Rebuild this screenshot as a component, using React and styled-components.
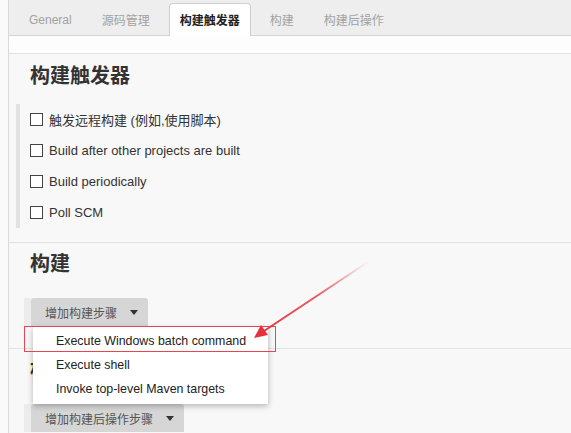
import styled, { createGlobalStyle } from "styled-components";

const GlobalStyle = createGlobalStyle`
  html, body {
    margin: 0;
    padding: 0;
    background: #fafafa;
  }
  body {
    font-family: "Liberation Sans", "Noto Sans CJK SC", sans-serif;
    color: #333;
  }
`;

const FONT = `"Liberation Sans", "Noto Sans CJK SC", sans-serif`;

const Page = styled.div`
  position: relative;
  margin-left: 8px;
  border-left: 1px solid #d9d9d9;
  background: #f8f8f8;
  height: 433px;
  overflow: hidden;
`;

const TabBar = styled.div`
  display: flex;
  align-items: flex-end;
  gap: 8px;
  height: 35px;
  padding-left: 9px;
  background: #eeeeee;
  border-bottom: 1px solid #d4d4d4;
`;

const Tab = styled.div`
  display: flex;
  align-items: center;
  height: 31px;
  padding: 0 10px 1px;
  font-family: ${FONT};
  font-size: 12px;
  font-weight: ${(p) => (p.$active ? "bold" : "normal")};
  color: ${(p) => (p.$active ? "#222" : "#a2a2a2")};
  background: ${(p) => (p.$active ? "#ffffff" : "transparent")};
  border: 1px solid ${(p) => (p.$active ? "#cfcfcf" : "transparent")};
  border-bottom: none;
  border-radius: 4px 4px 0 0;
  margin-bottom: -1px;
`;

const Strip = styled.div`
  height: 17px;
  background: #fdfdfd;
  border-bottom: 1px solid #e3e3e3;
`;

const Section = styled.section`
  position: relative;
  padding: 0 0 0 21px;
`;

const Heading = styled.h2`
  margin: ${(p) => p.$top || "9px"} 0 0;
  font-family: ${FONT};
  font-size: 20px;
  line-height: 24px;
  font-weight: bold;
  color: #333;
`;

const CheckList = styled.div`
  margin: 16px 0 0 -14px;
  padding-left: 10px;
  border-left: 4px solid #e2e2e2;
  display: flex;
  flex-direction: column;
`;

const CheckRow = styled.label`
  display: flex;
  align-items: center;
  gap: 6px;
  height: 31px;
  font-family: ${FONT};
  font-size: 13px;
  color: #333;
`;

const Box = styled.span`
  width: 11px;
  height: 11px;
  border: 1px solid #444;
  background: #fff;
  flex: none;
`;

const Separator = styled.div`
  height: 1px;
  background: #e2e2e2;
  margin-top: ${(p) => p.$top || "22px"};
`;

const ButtonRow = styled.div`
  position: relative;
  margin: 22px 0 0 -6px;
  display: flex;
`;

const ButtonWrap = styled.div`
  display: flex;
  border-left: 7px solid #ececec;
`;

const DropButton = styled.div`
  display: flex;
  align-items: center;
  gap: 13px;
  height: 28px;
  padding: 0 10px 0 14px;
  background: #d6d6d6;
  border-radius: 3px 3px 0 0;
  font-family: ${FONT};
  font-size: 12px;
  color: #555;
`;

const Caret = styled.span`
  width: 0;
  height: 0;
  border-left: 4px solid transparent;
  border-right: 4px solid transparent;
  border-top: 5px solid #333;
`;

const Menu = styled.div`
  position: absolute;
  z-index: 5;
  top: 29px;
  left: 9px;
  width: 235px;
  padding: 2px 0 3px;
  background: #fff;
  box-shadow: 0 2px 6px rgba(0, 0, 0, 0.28);
  display: flex;
  flex-direction: column;
`;

const MenuItem = styled.div`
  height: 24px;
  display: flex;
  align-items: center;
  padding-left: 23px;
  font-family: ${FONT};
  font-size: 12.4px;
  color: #222;
  white-space: nowrap;
`;

const Highlight = styled.div`
  position: absolute;
  z-index: 6;
  top: 28px;
  left: 0;
  width: 250px;
  height: 24px;
  border: 1.5px solid #e4474f;
  pointer-events: none;
`;

const Arrow = styled.svg`
  position: absolute;
  z-index: 7;
  left: -9px;
  top: 0;
  pointer-events: none;
`;

export default function App() {
  return (
    <>
      <GlobalStyle />
      <Page>
        <TabBar>
          <Tab>General</Tab>
          <Tab>源码管理</Tab>
          <Tab $active>构建触发器</Tab>
          <Tab>构建</Tab>
          <Tab>构建后操作</Tab>
        </TabBar>
        <Strip />
        <Section>
          <Heading $top="10px">构建触发器</Heading>
          <CheckList>
            <CheckRow><Box />触发远程构建 (例如,使用脚本)</CheckRow>
            <CheckRow><Box />Build after other projects are built</CheckRow>
            <CheckRow><Box />Build periodically</CheckRow>
            <CheckRow><Box />Poll SCM</CheckRow>
          </CheckList>
        </Section>
        <Separator $top="14px" />
        <Section>
          <Heading>构建</Heading>
          <ButtonRow>
            <ButtonWrap>
              <DropButton>增加构建步骤<Caret /></DropButton>
            </ButtonWrap>
            <Menu>
              <MenuItem>Execute Windows batch command</MenuItem>
              <MenuItem>Execute shell</MenuItem>
              <MenuItem>Invoke top-level Maven targets</MenuItem>
            </Menu>
            <Highlight />
          </ButtonRow>
        </Section>
        <Separator />
        <Section>
          <Heading $top="9px">构建后操作</Heading>
          <ButtonRow>
            <ButtonWrap>
              <DropButton>增加构建后操作步骤<Caret /></DropButton>
            </ButtonWrap>
          </ButtonRow>
        </Section>
        <Arrow width="571" height="433" viewBox="0 0 571 433">
          <defs>
            <linearGradient id="fade" x1="368" y1="262" x2="256" y2="337" gradientUnits="userSpaceOnUse">
              <stop offset="0" stopColor="#e8303c" stopOpacity="0" />
              <stop offset="0.45" stopColor="#e8303c" stopOpacity="0.8" />
              <stop offset="1" stopColor="#e8303c" stopOpacity="1" />
            </linearGradient>
          </defs>
          <line x1="368" y1="262" x2="264" y2="331" stroke="url(#fade)" strokeWidth="2" strokeLinecap="round" />
          <polygon points="254,338 261,325 268,335" fill="#e8303c" />
        </Arrow>
      </Page>
    </>
  );
}
